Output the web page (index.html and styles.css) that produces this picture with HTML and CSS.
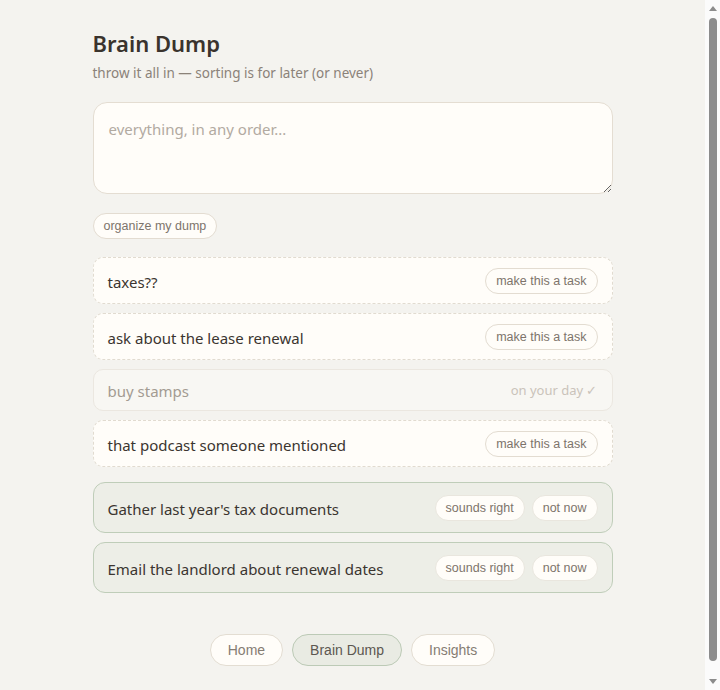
FILE: index.html
```html
<!DOCTYPE html>
<html lang="en">
<head>
<meta charset="utf-8">
<title>Brain Dump</title>
<link rel="stylesheet" href="styles.css">
</head>
<body>
<main class="page">
  <header class="head">
    <h1 class="title">Brain Dump</h1>
    <p class="subtitle">throw it all in — sorting is for later (or never)</p>
  </header>
  <textarea class="dump" placeholder="everything, in any order..."></textarea>
  <div class="actions">
    <button class="pill">organize my dump</button>
  </div>
  <ul class="items">
    <li class="item"><span class="item-text">taxes??</span><button class="pill">make this a task</button></li>
    <li class="item"><span class="item-text">ask about the lease renewal</span><button class="pill">make this a task</button></li>
    <li class="item done"><span class="item-text">buy stamps</span><span class="done-note">on your day ✓</span></li>
    <li class="item"><span class="item-text">that podcast someone mentioned</span><button class="pill">make this a task</button></li>
  </ul>
  <ul class="proposals">
    <li class="proposal"><span class="item-text">Gather last year's tax documents</span><span class="btns"><button class="pill">sounds right</button><button class="pill">not now</button></span></li>
    <li class="proposal"><span class="item-text">Email the landlord about renewal dates</span><span class="btns"><button class="pill">sounds right</button><button class="pill">not now</button></span></li>
  </ul>
  <nav class="nav">
    <button class="nav-pill">Home</button>
    <button class="nav-pill active">Brain Dump</button>
    <button class="nav-pill">Insights</button>
  </nav>
</main>
<div class="scrollbar" aria-hidden="true">
  <span class="arrow up"></span>
  <span class="thumb"></span>
  <span class="arrow down"></span>
</div>
</body>
</html>
```
FILE: styles.css
```css
html, body {
  margin: 0;
  padding: 0;
}
body {
  background: #f4f3ef;
  font-family: "Noto Sans", "Open Sans", sans-serif;
  color: #3b3530;
  padding-right: 15px;
}
.scrollbar {
  position: fixed;
  top: 0;
  right: 0;
  bottom: 0;
  width: 15px;
  background: #fbfbfb;
  display: flex;
  flex-direction: column;
  align-items: center;
  padding: 6px 0;
  box-sizing: border-box;
}
.arrow {
  width: 0;
  height: 0;
  border-left: 4px solid transparent;
  border-right: 4px solid transparent;
}
.arrow.up {
  border-bottom: 5px solid #8c8c8c;
}
.arrow.down {
  border-top: 5px solid #8c8c8c;
}
.thumb {
  flex: 1;
  width: 8px;
  margin: 7px 0 18px;
  background: #8c8c8c;
  border-radius: 4px;
}
.page {
  max-width: 520px;
  margin: 0 auto;
  padding: 28px 0 39px;
}
.title {
  margin: 0;
  font-size: 22px;
  font-weight: 600;
  line-height: 30px;
  color: #3a332d;
}
.subtitle {
  margin: 6px 0 0;
  font-size: 13.5px;
  line-height: 18px;
  color: #8b8279;
}
.dump {
  display: block;
  box-sizing: border-box;
  width: 100%;
  height: 92px;
  margin-top: 20px;
  padding: 15px 15px;
  border: 1px solid #e4ddd2;
  border-radius: 14px;
  background: #fffdf9;
  font-family: inherit;
  font-size: 15px;
  line-height: 22px;
  color: #3b3530;
  outline: none;
}
.dump::placeholder {
  color: #b2aaa1;
}
.actions {
  margin-top: 19px;
}
.pill {
  font-family: "Liberation Sans", Arial, sans-serif;
  font-size: 12.5px;
  line-height: 14px;
  padding: 5px 10px;
  border: 1px solid #e3dcd1;
  border-radius: 999px;
  background: #fffdf9;
  color: #7d746b;
  cursor: pointer;
}
.items, .proposals {
  list-style: none;
  margin: 0;
  padding: 0;
  display: flex;
  flex-direction: column;
  gap: 9px;
}
.items {
  margin-top: 18px;
}
.item {
  display: flex;
  align-items: center;
  justify-content: space-between;
  box-sizing: border-box;
  min-height: 47px;
  padding: 0 14px;
  border: 1px dashed #e1dbd0;
  border-radius: 10px;
  background: #fffdf9;
  font-size: 15px;
}
.item-text {
  padding-top: 2px;
}
.item.done {
  min-height: 42px;
  border: 1px solid #ebe7e0;
  background: #f8f7f3;
  color: #a39b92;
}
.done-note {
  font-size: 13px;
  color: #cac3ba;
}
.proposals {
  margin-top: 15px;
}
.proposal {
  display: flex;
  align-items: center;
  justify-content: space-between;
  box-sizing: border-box;
  min-height: 51px;
  padding: 0 14px;
  border: 1px solid #bfcdb9;
  border-radius: 12px;
  background: #edeee7;
  font-size: 15px;
}
.btns {
  display: flex;
  gap: 7px;
}
.proposal .pill {
  border-color: #e9e6de;
}
.nav {
  display: flex;
  justify-content: center;
  gap: 9px;
  margin-top: 41px;
}
.nav-pill {
  font-family: "Liberation Sans", Arial, sans-serif;
  font-size: 14px;
  line-height: 16px;
  padding: 7px 17px;
  border: 1px solid #e3ddd2;
  border-radius: 999px;
  background: #fffdf9;
  color: #857c73;
  cursor: pointer;
}
.nav-pill.active {
  background: #e9ebe3;
  border-color: #bccab6;
  color: #5c5750;
}
```
